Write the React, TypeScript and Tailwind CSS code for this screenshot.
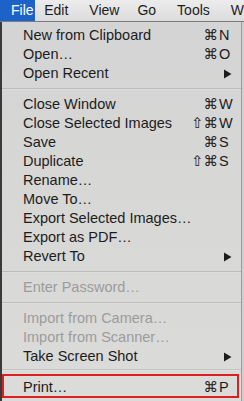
import React from "react";

type Item =
  | { kind: "item"; label: string; mods?: string; key?: string; arrow?: boolean; disabled?: boolean }
  | { kind: "sep" };

const items: Item[] = [
  { kind: "item", label: "New from Clipboard", mods: "⌘", key: "N" },
  { kind: "item", label: "Open…", mods: "⌘", key: "O" },
  { kind: "item", label: "Open Recent", arrow: true },
  { kind: "sep" },
  { kind: "item", label: "Close Window", mods: "⌘", key: "W" },
  { kind: "item", label: "Close Selected Images", mods: "⇧⌘", key: "W" },
  { kind: "item", label: "Save", mods: "⌘", key: "S" },
  { kind: "item", label: "Duplicate", mods: "⇧⌘", key: "S" },
  { kind: "item", label: "Rename…" },
  { kind: "item", label: "Move To…" },
  { kind: "item", label: "Export Selected Images…" },
  { kind: "item", label: "Export as PDF…" },
  { kind: "item", label: "Revert To", arrow: true },
  { kind: "sep" },
  { kind: "item", label: "Enter Password…", disabled: true },
  { kind: "sep" },
  { kind: "item", label: "Import from Camera…", disabled: true },
  { kind: "item", label: "Import from Scanner…", disabled: true },
  { kind: "item", label: "Take Screen Shot", arrow: true },
];

function Arrow() {
  return (
    <svg width="8" height="10" viewBox="0 0 8 10" className="ml-[5px]">
      <path d="M0 0.5 L7.5 5 L0 9.5 Z" fill="#1c1c1c" />
    </svg>
  );
}

function Row({ it }: { it: Extract<Item, { kind: "item" }> }) {
  return (
    <div
      className={
        "flex h-[19px] items-center pl-[21px] pr-[7px] leading-[19px] " +
        (it.disabled ? "text-[#9c9c9c]" : "text-[#1c1c1c]")
      }
    >
      <span className="flex-1 whitespace-nowrap">{it.label}</span>
      <span className="whitespace-nowrap text-right">{it.mods ?? ""}</span>
      <span className="flex w-[16px] items-center pl-[1px]">
        {it.key ?? ""}
        {it.arrow ? <Arrow /> : null}
      </span>
    </div>
  );
}

function Sep() {
  return (
    <div className="flex h-[12px] flex-col justify-center">
      <div className="h-[1px] bg-[#bcbcbc]" />
      <div className="h-[1px] bg-[#dedede]" />
    </div>
  );
}

export default function App() {
  return (
    <div
      className="flex h-[401px] w-[244px] flex-col overflow-hidden bg-[#d8d8d8] text-[14.5px]"
      style={{ fontFamily: '"Liberation Sans", "DejaVu Sans", Arial, sans-serif' }}
    >
      {/* menu bar */}
      <div className="flex h-[22px] shrink-0 items-stretch border-b border-[#7d7d7d] bg-gradient-to-b from-[#ececec] to-[#dcdcdc] text-[14px] leading-[21px] text-[#1c1c1c]">
        <div className="w-[43px] bg-[#1c62c8] pl-[11px] text-white">File</div>
        <div className="ml-[9px]">Edit</div>
        <div className="ml-[21px]">View</div>
        <div className="ml-[18px]">Go</div>
        <div className="ml-[21px]">Tools</div>
        <div className="ml-[21px] whitespace-nowrap">W</div>
      </div>

      <div className="flex flex-1">
        <div className="w-[2px] bg-[#3a3a3a]" />
        <div className="flex w-[240px] flex-col border-r border-[#9c9c9c] bg-gradient-to-b from-[#d4d4d4] to-[#dbdbd9] pt-[4px]">
          {items.map((it, i) =>
            it.kind === "sep" ? <Sep key={i} /> : <Row key={i} it={it} />
          )}
          <div className="flex h-[8px] flex-col justify-center">
            <div className="h-[1px] bg-[#c4c4c4]" />
            <div className="h-[1px] bg-[#dedede]" />
          </div>
          <div className="mr-[2px] border-2 border-[#df1f1f]">
            <div className="flex h-[20px] items-center pl-[19px] pr-[3px] pt-[3px] leading-[19px] text-[#1c1c1c]">
              <span className="flex-1">Print…</span>
              <span>⌘</span>
              <span className="w-[16px] pl-[1px]">P</span>
            </div>
          </div>
        </div>
        <div className="flex-1 bg-[#cfcfcf]" />
      </div>
    </div>
  );
}
